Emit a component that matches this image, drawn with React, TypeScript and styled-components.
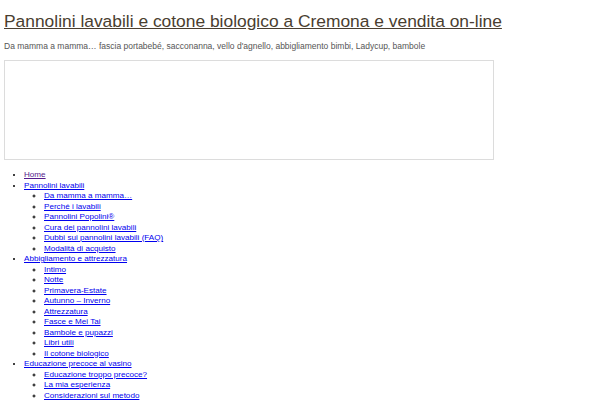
import { createGlobalStyle, styled } from "styled-components";

const GlobalStyle = createGlobalStyle`
  body {
    margin: 0;
    background: #fff;
    font-family: "Liberation Sans", Arial, sans-serif;
  }
`;

type Item = { label: string; visited?: boolean; children?: string[] };

const menu: Item[] = [
  { label: "Home", visited: true },
  {
    label: "Pannolini lavabili",
    children: [
      "Da mamma a mamma…",
      "Perché i lavabili",
      "Pannolini Popolini®",
      "Cura dei pannolini lavabili",
      "Dubbi sui pannolini lavabili (FAQ)",
      "Modalità di acquisto",
    ],
  },
  {
    label: "Abbigliamento e attrezzatura",
    children: [
      "Intimo",
      "Notte",
      "Primavera-Estate",
      "Autunno – Inverno",
      "Attrezzatura",
      "Fasce e Mei Tai",
      "Bambole e pupazzi",
      "Libri utili",
      "Il cotone biologico",
    ],
  },
  {
    label: "Educazione precoce al vasino",
    children: [
      "Educazione troppo precoce?",
      "La mia esperienza",
      "Considerazioni sul metodo",
    ],
  },
];

function App() {
  return (
    <Page>
      <GlobalStyle />
      <Header>
        <Title>
          <a href="#">Pannolini lavabili e cotone biologico a Cremona e vendita on-line</a>
        </Title>
        <Tagline>
          Da mamma a mamma… fascia portabebé, sacconanna, vello d'agnello, abbigliamento bimbi, Ladycup, bambole
        </Tagline>
      </Header>
      <Banner />
      <Menu>
        {menu.map((item) => (
          <li key={item.label}>
            <MenuLink href="#" $visited={item.visited}>
              {item.label}
            </MenuLink>
            {item.children && (
              <SubMenu>
                {item.children.map((c) => (
                  <li key={c}>
                    <MenuLink href="#">{c}</MenuLink>
                  </li>
                ))}
              </SubMenu>
            )}
          </li>
        ))}
      </Menu>
    </Page>
  );
}

const Page = styled.div`
  padding: 0 4px;
  font-size: 8.1px;
  line-height: 10.5px;
`;

const Header = styled.header`
  padding-top: 11px;
`;

const Title = styled.h1`
  margin: 0;
  font-size: 17.4px;
  line-height: 20px;
  font-weight: normal;
  a {
    color: #4a3e30;
  }
`;

const Tagline = styled.p`
  margin: 10px 0 0;
  color: #555;
  font-size: 8.5px;
  line-height: 10px;
`;

const Banner = styled.div`
  margin-top: 9px;
  width: 488px;
  height: 98px;
  border: 1px solid #dcdcdc;
`;

const Menu = styled.ul`
  margin: 10px 0 0;
  padding-left: 20px;
  list-style: disc;
`;

const SubMenu = styled.ul`
  margin: 0;
  padding-left: 20px;
  list-style: circle;
`;

const MenuLink = styled.a<{ $visited?: boolean }>`
  color: ${(p) => (p.$visited ? "#551a8b" : "#0000ee")};
`;

export default App;
